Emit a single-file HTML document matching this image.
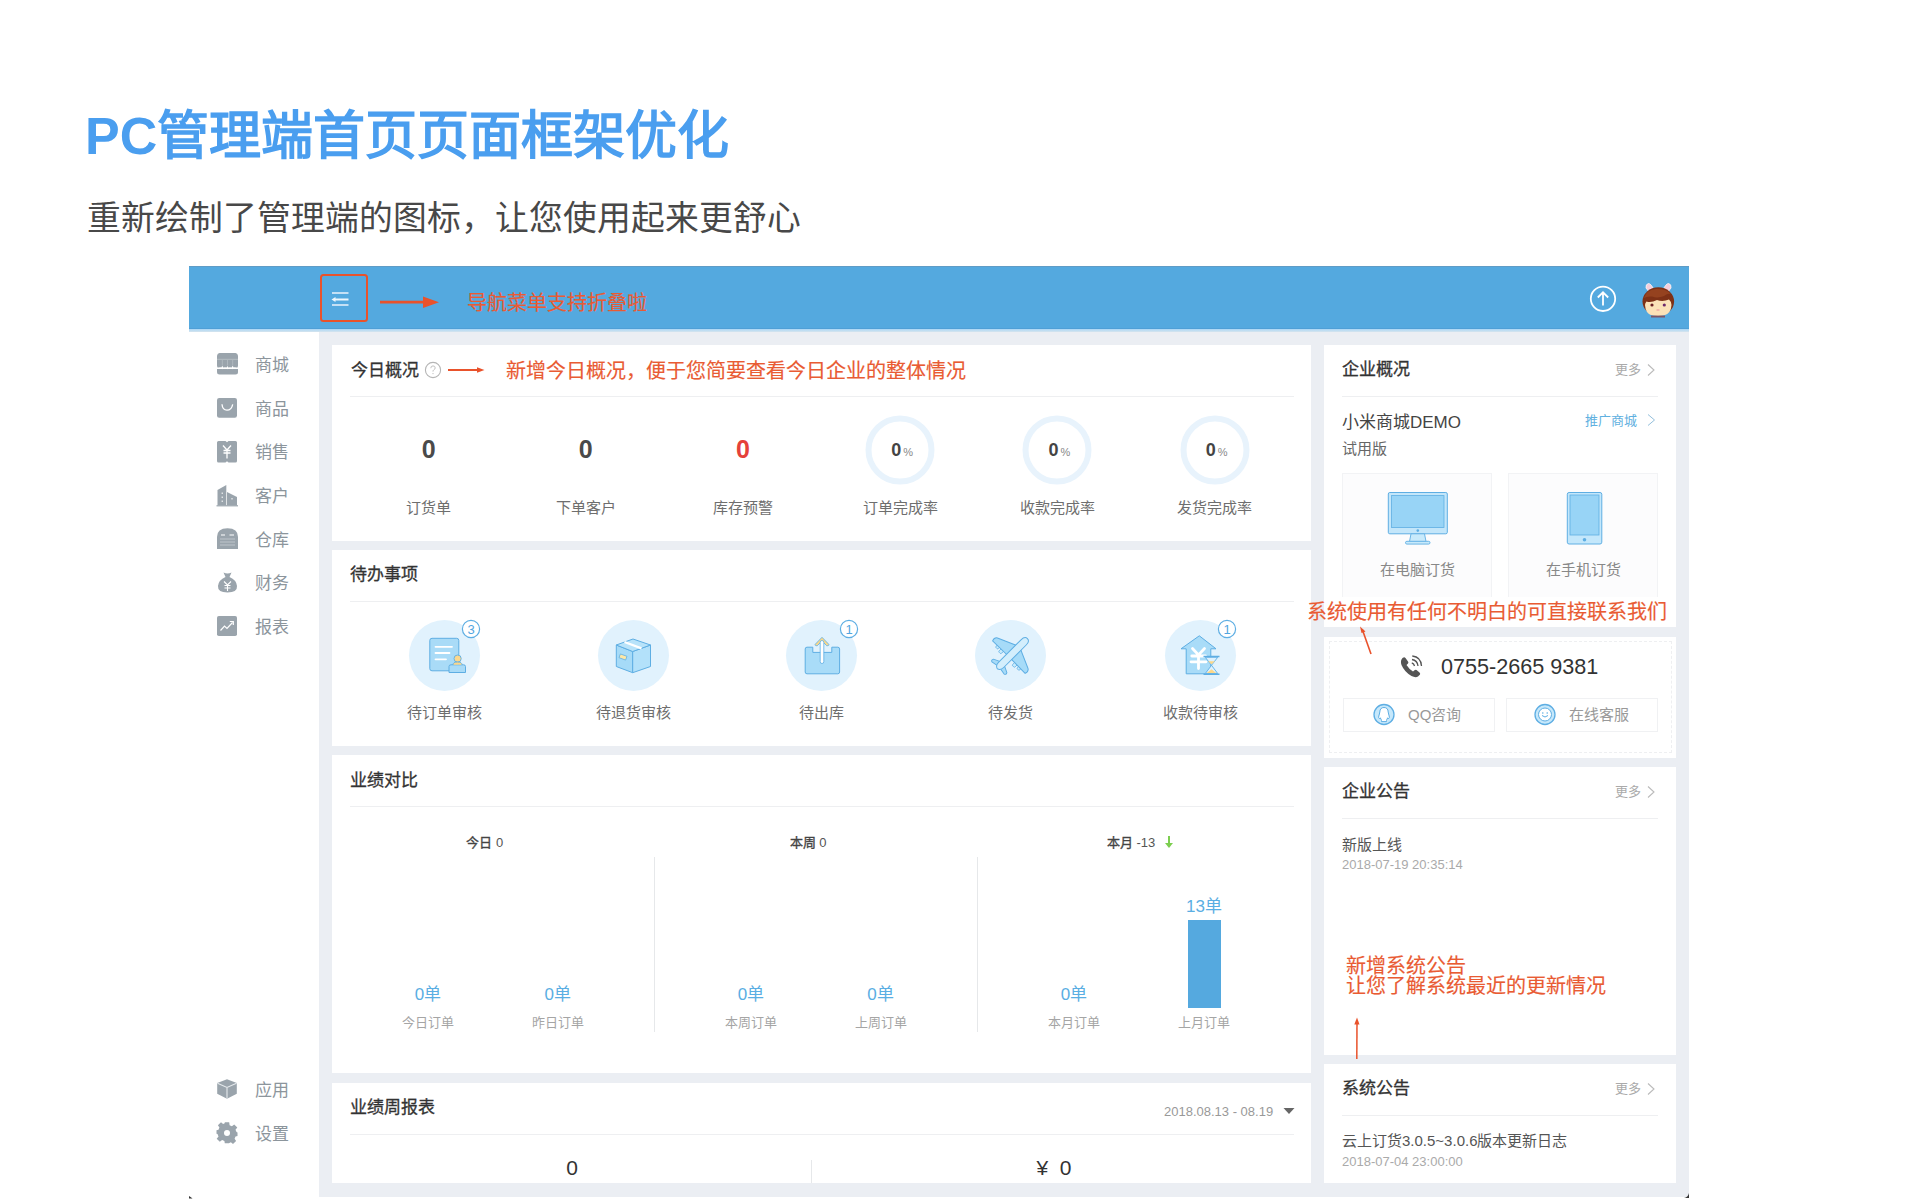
<!DOCTYPE html>
<html lang="zh-CN"><head><meta charset="utf-8">
<style>
*{margin:0;padding:0;box-sizing:border-box}
html,body{width:1920px;height:1200px;overflow:hidden;background:#fff}
body{position:relative;font-family:"Liberation Sans",sans-serif;color:#333}
.a{position:absolute;white-space:nowrap}
.t{position:absolute;white-space:nowrap;line-height:1}
.card{position:absolute;background:#fff}
.hr{position:absolute;height:1px;background:#eeeff1}
.org{color:#e95b33;-webkit-text-stroke:0.15px #e95b33}
</style></head><body>
<!-- page titles -->
<div class="t" id="title" style="left:85px;top:109.5px;font-size:52px;font-weight:bold;color:#4a9eef">PC管理端首页页面框架优化</div>
<div class="t" id="sub" style="left:86.5px;top:201.5px;font-size:33.8px;color:#484848">重新绘制了管理端的图标，让您使用起来更舒心</div>

<!-- app frame -->
<div class="a" style="left:189px;top:266px;width:1500px;height:63px;background:#54a9df;border-top:1px solid #5f9cc6;border-bottom:1px solid #4f9fd6"></div>
<div class="a" style="left:189px;top:329px;width:1500px;height:3px;background:linear-gradient(#a9d7f6,#d6e4ee)"></div>
<div class="a" style="left:189px;top:332px;width:130px;height:865px;background:#fff"></div>
<div class="a" style="left:319px;top:332px;width:1370px;height:865px;background:#ebeef3"></div>

<!-- cards -->
<div class="card" style="left:332px;top:345px;width:979px;height:196px"></div>
<div class="card" style="left:332px;top:550px;width:979px;height:196px"></div>
<div class="card" style="left:332px;top:755px;width:979px;height:318px"></div>
<div class="card" style="left:332px;top:1083px;width:979px;height:100px"></div>
<div class="card" style="left:1324px;top:345px;width:352px;height:282px"></div>
<div class="card" style="left:1324px;top:637px;width:352px;height:120.5px"></div>
<div class="card" style="left:1324px;top:767px;width:352px;height:288px"></div>
<div class="card" style="left:1324px;top:1064px;width:352px;height:119px"></div>


<!-- header content -->
<div class="a" style="left:320px;top:274px;width:48px;height:48px;border:2.8px solid #e9522b;border-radius:3.5px"></div>
<svg class="a" style="left:328px;top:288px" width="24" height="22" viewBox="0 0 24 22">
 <rect x="4" y="4" width="16.5" height="2" fill="#c4e0f5"/>
 <rect x="6.5" y="10.5" width="14" height="2" fill="#eef7fd"/>
 <path d="M3.5 11.5 L7.5 9 L7.5 14 Z" fill="#eef7fd"/>
 <rect x="4" y="16" width="16.5" height="2" fill="#c4e0f5"/>
</svg>
<svg class="a" style="left:378px;top:294px" width="64" height="16" viewBox="0 0 64 16">
 <path d="M2 6.8 L48 6.8 L48 9.6 L2 9.6 Z" fill="#e9522b"/>
 <path d="M45 2.5 L61 8.2 L45 13.9 Z" fill="#e9522b"/>
</svg>
<div class="t org" style="left:467px;top:292.8px;font-size:20px">导航菜单支持折叠啦</div>
<svg class="a" style="left:1588px;top:284px" width="30" height="30" viewBox="0 0 30 30">
 <circle cx="15" cy="14.8" r="12.2" fill="none" stroke="#fff" stroke-width="1.8"/>
 <path d="M15 21.5 V8.5 M9.8 13.5 L15 8.3 L20.2 13.5" fill="none" stroke="#fff" stroke-width="1.8"/>
</svg>

<!-- sidebar -->
<svg class="a" style="left:216px;top:352px" width="23" height="24" viewBox="0 0 23 24">
 <path d="M3.5 1 H19.5 Q21.5 1 22 3.5 L22 7 H1 L1 3.5 Q1.5 1 3.5 1Z" fill="#9aa4ac"/>
 <path d="M1 7 H22 V13.5 Q22 16 19.5 16 Q17 16 16.7 13.5 Q16.3 16 14 16 Q11.5 16 11.5 13.5 Q11.2 16 9 16 Q6.5 16 6.3 13.5 Q6 16 3.5 16 Q1 16 1 13.5 Z" fill="#9aa4ac"/>
 <path d="M1 7.3 H22" stroke="#c1c8cd" stroke-width="0.7"/>
 <path d="M6.3 8 V13.3 M11.5 8 V13.3 M16.7 8 V13.3" stroke="#b9c1c7" stroke-width="0.7"/>
 <path d="M1 17 V20 Q1 22.5 3.5 22.5 H19.5 Q22 22.5 22 20 V17 Z" fill="#9aa4ac"/>
 <path d="M1.5 16.6 Q4 15 6.5 16.6 Q9 15 11.5 16.6 Q14 15 16.5 16.6 Q19 15 21.5 16.6" fill="none" stroke="#fff" stroke-width="1.1"/>
</svg>
<div class="t" style="left:255px;top:357px;font-size:17px;color:#8c959c">商城</div>

<svg class="a" style="left:216px;top:397px" width="22" height="22" viewBox="0 0 22 22">
 <rect x="1" y="1" width="20" height="19.7" rx="2.2" fill="#9aa4ac"/>
 <path d="M6 7.3 Q6.5 13.2 11 13.2 Q15.5 13.2 16.7 7.3" fill="none" stroke="#fff" stroke-width="1.3"/>
</svg>
<div class="t" style="left:255px;top:401px;font-size:17px;color:#8c959c">商品</div>

<svg class="a" style="left:216px;top:440px" width="22" height="24" viewBox="0 0 22 24">
 <path d="M2.5 1 H9.5 L11 2.3 L12.5 1 H19.5 Q21 1 21 2.5 V21 Q21 22.6 19.5 22.6 H12.5 L11 21.3 L9.5 22.6 H2.5 Q1 22.6 1 21 V2.5 Q1 1 2.5 1Z" fill="#9aa4ac"/>
 <path d="M7 5.5 L11 10 L15 5.5 M7.5 10.5 H14.5 M7.5 13 H14.5 M11 10 V18.5" fill="none" stroke="#fff" stroke-width="1.3"/>
</svg>
<div class="t" style="left:255px;top:444px;font-size:17px;color:#8c959c">销售</div>

<svg class="a" style="left:216px;top:484px" width="23" height="23" viewBox="0 0 23 23">
 <path d="M1.5 21.5 V6 L10.3 1 V21.5 Z" fill="#9aa4ac"/>
 <path d="M11 21.5 V8 L19 12 L21 13 V21.5 Z" fill="#9aa4ac"/>
 <path d="M0.5 21.8 H22" stroke="#9aa4ac" stroke-width="1.2"/>
 <path d="M6.2 8.5 V10 M6.2 12.5 V14 M6.2 16.5 V18" stroke="#fff" stroke-width="1"/>
 <path d="M16 14 V15.5" stroke="#fff" stroke-width="1"/>
</svg>
<div class="t" style="left:255px;top:488px;font-size:17px;color:#8c959c">客户</div>

<svg class="a" style="left:216px;top:527px" width="23" height="24" viewBox="0 0 23 24">
 <path d="M1 22 V10 Q1 1.2 11.5 1.2 Q22 1.2 22 10 V22 Z" fill="#9aa4ac"/>
 <path d="M5 8 H9 M13.5 8 H18" stroke="#fff" stroke-width="1.2"/>
 <path d="M4 12 H19 M4 15 H19 M4 18 H19" stroke="#c3cacf" stroke-width="0.9"/>
</svg>
<div class="t" style="left:255px;top:532px;font-size:17px;color:#8c959c">仓库</div>

<svg class="a" style="left:216px;top:571px" width="23" height="23" viewBox="0 0 23 23">
 <path d="M7.5 1.5 Q11.5 3.5 15.5 1.5 L13.5 6 Q20.5 9 21 15 Q21.5 21.5 11.5 21.5 Q1.5 21.5 2 15 Q2.5 9 9.5 6 Z" fill="#9aa4ac"/>
 <path d="M8 10.5 L11.5 14 L15 10.5 M8.5 14.5 H14.5 M8.5 17 H14.5 M11.5 14 V20" fill="none" stroke="#fff" stroke-width="1.1"/>
</svg>
<div class="t" style="left:255px;top:575px;font-size:17px;color:#8c959c">财务</div>

<svg class="a" style="left:216px;top:615px" width="22" height="22" viewBox="0 0 22 22">
 <rect x="1" y="1" width="20" height="20" rx="1.8" fill="#9aa4ac"/>
 <path d="M4.5 15.5 L8.5 11 L11 13.5 L16.5 7.5" fill="none" stroke="#fff" stroke-width="1.2"/>
 <path d="M13.8 6.5 H17.3 V10" fill="none" stroke="#fff" stroke-width="1.2"/>
</svg>
<div class="t" style="left:255px;top:619px;font-size:17px;color:#8c959c">报表</div>

<svg class="a" style="left:216px;top:1078px" width="22" height="22" viewBox="0 0 22 22">
 <path d="M11 1.2 L20.8 5 V15.8 L11 20.8 L1.2 15.8 V5 Z" fill="#9aa4ac"/>
 <path d="M1.5 5.2 L11 9.5 L20.5 5.2 M11 9.5 V20.5" fill="none" stroke="#e6eaed" stroke-width="1.1"/>
</svg>
<div class="t" style="left:255px;top:1082px;font-size:17px;color:#8c959c">应用</div>

<svg class="a" style="left:215px;top:1121px" width="24" height="24" viewBox="0 0 24 24">
 <g transform="translate(12 11.8)">
 <path d="M-2.2 -10.5 H2.2 L2.6 -7.6 L4.9 -6.6 L7.2 -8.4 L10.3 -5.3 L8.5 -3 L9.5 -0.7 L10.5 -0.3 V3.2 L8.5 3.7 L7.6 5.9 L9.1 8.1 L6 11.2 L3.9 9.5 L2.3 10.2 L2 10.5 H-2.2 L-2.6 8.2 L-4.9 7.2 L-7.2 9 L-10.3 5.9 L-8.5 3.6 L-9.5 1.3 L-10.5 0.9 V-2.6 L-8.5 -3.1 L-7.6 -5.3 L-9.1 -7.5 L-6 -10.6 L-3.9 -8.9 L-2.3 -9.6 Z" fill="#9aa4ac"/>
 <circle cx="0" cy="0.2" r="3" fill="#fff"/>
 </g>
</svg>
<div class="t" style="left:255px;top:1126px;font-size:17px;color:#8c959c">设置</div>

<!-- card1 今日概况 -->
<div class="t" style="left:351px;top:361.5px;font-size:17px;color:#333;-webkit-text-stroke:0.3px #333">今日概况</div>
<svg class="a" style="left:423px;top:360px" width="20" height="20" viewBox="0 0 20 20">
 <circle cx="10" cy="10" r="7.6" fill="none" stroke="#b5b5b5" stroke-width="1.1"/>
 <path d="M7.8 8.2 Q7.8 5.9 10 5.9 Q12.2 5.9 12.2 7.9 Q12.2 9.2 10.6 10 Q10 10.4 10 11.6" fill="none" stroke="#c0c0c0" stroke-width="1"/>
 <circle cx="10" cy="13.6" r="0.7" fill="#c0c0c0"/>
</svg>
<svg class="a" style="left:446px;top:364px" width="42" height="12" viewBox="0 0 42 12">
 <path d="M2 5 H33 V7 H2 Z" fill="#e9522b"/>
 <path d="M31 3.3 L38.5 6 L31 8.7 Z" fill="#e9522b"/>
</svg>
<div class="t org" style="left:506px;top:361.3px;font-size:20px">新增今日概况，便于您简要查看今日企业的整体情况</div>
<div class="hr" style="left:350px;top:396px;width:944px"></div>
<div class="t" style="left:328.6px;width:200px;text-align:center;top:499.6px;font-size:15px;color:#6e6e6e">订货单</div>
<div class="t" style="left:485.79999999999995px;width:200px;text-align:center;top:499.6px;font-size:15px;color:#6e6e6e">下单客户</div>
<div class="t" style="left:643px;width:200px;text-align:center;top:499.6px;font-size:15px;color:#6e6e6e">库存预警</div>
<div class="t" style="left:800.2px;width:200px;text-align:center;top:499.6px;font-size:15px;color:#6e6e6e">订单完成率</div>
<div class="t" style="left:957.4000000000001px;width:200px;text-align:center;top:499.6px;font-size:15px;color:#6e6e6e">收款完成率</div>
<div class="t" style="left:1114.6px;width:200px;text-align:center;top:499.6px;font-size:15px;color:#6e6e6e">发货完成率</div>
<div class="t" style="left:378.6px;width:100px;text-align:center;top:437px;font-size:25px;font-weight:bold;color:#4a4a4a">0</div>
<div class="t" style="left:535.8px;width:100px;text-align:center;top:437px;font-size:25px;font-weight:bold;color:#4a4a4a">0</div>
<div class="t" style="left:693px;width:100px;text-align:center;top:437px;font-size:25px;font-weight:bold;color:#e5413a">0</div>
<svg class="a" style="left:863.2px;top:413px" width="74" height="74" viewBox="0 0 74 74"><circle cx="37" cy="37" r="31.5" fill="none" stroke="#e8f3fc" stroke-width="6"/></svg>
<div class="t" style="left:852.2px;width:100px;text-align:center;top:441.3px;font-size:18px;font-weight:bold;color:#444">0<span style="font-size:11px;font-weight:normal;color:#888;margin-left:2px">%</span></div>
<svg class="a" style="left:1020.4000000000001px;top:413px" width="74" height="74" viewBox="0 0 74 74"><circle cx="37" cy="37" r="31.5" fill="none" stroke="#e8f3fc" stroke-width="6"/></svg>
<div class="t" style="left:1009.4000000000001px;width:100px;text-align:center;top:441.3px;font-size:18px;font-weight:bold;color:#444">0<span style="font-size:11px;font-weight:normal;color:#888;margin-left:2px">%</span></div>
<svg class="a" style="left:1177.6px;top:413px" width="74" height="74" viewBox="0 0 74 74"><circle cx="37" cy="37" r="31.5" fill="none" stroke="#e8f3fc" stroke-width="6"/></svg>
<div class="t" style="left:1166.6px;width:100px;text-align:center;top:441.3px;font-size:18px;font-weight:bold;color:#444">0<span style="font-size:11px;font-weight:normal;color:#888;margin-left:2px">%</span></div>

<!-- card2 待办事项 -->
<div class="t" style="left:350px;top:565.5px;font-size:17px;color:#333;-webkit-text-stroke:0.3px #333">待办事项</div>
<div class="hr" style="left:350px;top:601px;width:944px"></div>
<div class="a" style="left:409.1px;top:620px;width:71px;height:71px;border-radius:50%;background:#e1f2fd"></div>
<div class="t" style="left:344.6px;width:200px;text-align:center;top:705.0px;font-size:15px;color:#6e6e6e">待订单审核</div>
<div class="a" style="left:597.7px;top:620px;width:71px;height:71px;border-radius:50%;background:#e1f2fd"></div>
<div class="t" style="left:533.2px;width:200px;text-align:center;top:705.0px;font-size:15px;color:#6e6e6e">待退货审核</div>
<div class="a" style="left:786.3px;top:620px;width:71px;height:71px;border-radius:50%;background:#e1f2fd"></div>
<div class="t" style="left:721.8px;width:200px;text-align:center;top:705.0px;font-size:15px;color:#6e6e6e">待出库</div>
<div class="a" style="left:975.1px;top:620px;width:71px;height:71px;border-radius:50%;background:#e1f2fd"></div>
<div class="t" style="left:910.6px;width:200px;text-align:center;top:705.0px;font-size:15px;color:#6e6e6e">待发货</div>
<div class="a" style="left:1164.5px;top:620px;width:71px;height:71px;border-radius:50%;background:#e1f2fd"></div>
<div class="t" style="left:1100px;width:200px;text-align:center;top:705.0px;font-size:15px;color:#6e6e6e">收款待审核</div>
<svg class="a" style="left:424px;top:634px" width="46" height="42" viewBox="424 634 46 42">
 <rect x="429.8" y="638.3" width="29" height="32.5" rx="2.2" fill="#a9dbf7" stroke="#5eaee3" stroke-width="1"/>
 <path d="M435.5 646.8 H452 M435.5 653 H449.5 M435.5 659.3 H446" stroke="#fff" stroke-width="1.8" stroke-linecap="round"/>
 <path d="M449 672.5 V666.5 Q449 664.8 451 664.8 H463.5 Q465.5 664.8 465.5 666.5 V672.5 Z" fill="#a9dbf7" stroke="#5eaee3" stroke-width="1"/>
 <circle cx="457.6" cy="658.6" r="3.6" fill="#fbd78c" stroke="#5eaee3" stroke-width="0.9"/>
 <path d="M453 664.8 Q453 662 457.6 662 Q462 662 462 664.8" fill="#fbd78c" stroke="#5eaee3" stroke-width="0.9"/>
</svg>
<svg class="a" style="left:460.8px;top:618.8px" width="20" height="20" viewBox="0 0 20 20"><circle cx="10" cy="10" r="8.6" fill="#fff" stroke="#5eaee3" stroke-width="1.2"/><text x="10" y="14.6" text-anchor="middle" font-family="Liberation Sans" font-size="13" fill="#52a6df">3</text></svg>
<svg class="a" style="left:612px;top:636px" width="42" height="40" viewBox="612 636 42 40">
 <path d="M616.3 645 L632.7 651.5 V672.7 L616.3 666.5 Z" fill="#a6dbf8" stroke="#5eaee3" stroke-width="1"/>
 <path d="M632.7 651.5 L650.5 645 V666.5 L632.7 672.7 Z" fill="#b3e1fa" stroke="#5eaee3" stroke-width="1"/>
 <path d="M616.3 645 L633 639 L650.5 645 L632.7 651.5 Z" fill="#b8e3fa" stroke="#5eaee3" stroke-width="1"/>
 <path d="M624.5 642 L641.5 648.4" stroke="#fff" stroke-width="2.2"/>
 <rect x="619.5" y="655" width="7" height="4" fill="#fde7a6" stroke="#5eaee3" stroke-width="0.7" transform="rotate(20 623 657)"/>
</svg>
<svg class="a" style="left:802px;top:634px" width="42" height="42" viewBox="802 634 42 42">
 <path d="M805.2 649 Q805.2 647.2 807 647.2 H812.8 V652.4 H831.8 V647.2 H837.8 Q839.6 647.2 839.6 649 V672 Q839.6 673.8 837.8 673.8 H807 Q805.2 673.8 805.2 672 Z" fill="#a9dcf8" stroke="#5eaee3" stroke-width="1"/>
 <path d="M822 637.3 L828.8 644.3 Q829.3 645.3 828.3 645.6 L826.8 645.8 L822 641 L817.2 645.8 L815.7 645.6 Q814.7 645.3 815.2 644.3 Z" fill="#fbd88a" stroke="#5eaee3" stroke-width="0.8" stroke-linejoin="round"/>
 <rect x="820.2" y="640.5" width="3.6" height="23" rx="1.8" fill="#fff" stroke="#5eaee3" stroke-width="0.8"/>
</svg>
<svg class="a" style="left:839px;top:619px" width="20" height="20" viewBox="0 0 20 20"><circle cx="10" cy="10" r="8.6" fill="#fff" stroke="#5eaee3" stroke-width="1.2"/><text x="10" y="14.6" text-anchor="middle" font-family="Liberation Sans" font-size="13" fill="#52a6df">1</text></svg>
<svg class="a" style="left:986px;top:630px" width="50" height="50" viewBox="986 630 50 50">
 <g transform="translate(1011 655) rotate(45) scale(1.08)">
  <path d="M-10.5 1.5 h3.2 v3.5 q0 1 -1 1 h-1.2 q-1 0 -1 -1 Z M-15.5 0.8 h3 v3.2 q0 1 -1 1 h-1 q-1 0 -1 -1 Z" fill="#c9ebfc" stroke="#5eaee3" stroke-width="0.7"/>
  <path d="M10.5 1.5 h-3.2 v3.5 q0 1 1 1 h1.2 q1 0 1 -1 Z M15.5 0.8 h-3 v3.2 q0 1 1 1 h1 q1 0 1 -1 Z" fill="#c9ebfc" stroke="#5eaee3" stroke-width="0.7"/>
  <path d="M-2.5 -10 L-20 -2.3 Q-22.5 -0.8 -21.3 2.8 L-2.5 2.5 Z" fill="#a6dbf8" stroke="#5eaee3" stroke-width="0.9" stroke-linejoin="round"/>
  <path d="M2.5 -10 L20 -2.3 Q22.5 -0.8 21.3 2.8 L2.5 2.5 Z" fill="#a6dbf8" stroke="#5eaee3" stroke-width="0.9" stroke-linejoin="round"/>
  <path d="M-2 11 L-8.8 14.2 Q-10 16.3 -8 17 L-1.5 15.8 Z M2 11 L8.8 14.2 Q10 16.3 8 17 L1.5 15.8 Z" fill="#a6dbf8" stroke="#5eaee3" stroke-width="0.9" stroke-linejoin="round"/>
  <path d="M-3.4 -16.5 Q-3.4 -21.5 0 -21.5 Q3.4 -21.5 3.4 -16.5 V13 Q3.4 17 0 18 Q-3.4 17 -3.4 13 Z" fill="#d3eefc" stroke="#5eaee3" stroke-width="0.9"/>
 </g>
</svg>
<svg class="a" style="left:1178px;top:633px" width="44" height="44" viewBox="1178 633 44 44">
 <path d="M1199.3 635.8 L1216 648.8 H1210.8 V673.8 H1186.2 V648.8 H1181 Z" fill="#a9dcf8" stroke="#5eaee3" stroke-width="1" stroke-linejoin="round"/>
 <path d="M1192.5 648.5 L1198.5 655 L1204.5 648.5 M1191.8 656 H1205.5 M1191 661.8 H1206 M1198.5 655 V668.5" fill="none" stroke="#fff" stroke-width="2.8" stroke-linecap="round"/>
 <path d="M1203.5 656.5 H1219.5 M1203.5 674.2 H1219.5" stroke="#5eaee3" stroke-width="1.6"/>
 <path d="M1205.3 657.3 H1217.7 L1211.5 665.3 L1217.7 673.5 H1205.3 L1211.5 665.3 Z" fill="#ddf1fd" stroke="#5eaee3" stroke-width="0.9"/>
 <path d="M1208 661.2 H1215 L1211.5 664.3 Z M1206.8 673 L1211.5 669.2 L1216.2 673 Z" fill="#fbd88a"/>
</svg>
<svg class="a" style="left:1216.6px;top:619px" width="20" height="20" viewBox="0 0 20 20"><circle cx="10" cy="10" r="8.6" fill="#fff" stroke="#5eaee3" stroke-width="1.2"/><text x="10" y="14.6" text-anchor="middle" font-family="Liberation Sans" font-size="13" fill="#52a6df">1</text></svg>

<!-- card3 业绩对比 -->
<div class="t" style="left:350px;top:771.5px;font-size:17px;color:#333;-webkit-text-stroke:0.3px #333">业绩对比</div>
<div class="hr" style="left:350px;top:806px;width:944px"></div>
<div class="a" style="left:654px;top:857px;width:1px;height:175px;background:#e6e8ea"></div>
<div class="a" style="left:977px;top:857px;width:1px;height:175px;background:#e6e8ea"></div>
<div class="t" style="left:404.7px;width:160px;text-align:center;top:835.5px;font-size:13px;color:#555"><b style="font-weight:normal;-webkit-text-stroke:0.35px #444;color:#444">今日</b> 0</div>
<div class="t" style="left:728px;width:160px;text-align:center;top:835.5px;font-size:13px;color:#555"><b style="font-weight:normal;-webkit-text-stroke:0.35px #444;color:#444">本周</b> 0</div>
<div class="t" style="left:1051px;width:160px;text-align:center;top:835.5px;font-size:13px;color:#555"><b style="font-weight:normal;-webkit-text-stroke:0.35px #444;color:#444">本月</b> -13</div>
<svg class="a" style="left:1163px;top:834px" width="12" height="16" viewBox="0 0 12 16"><path d="M6 2 V12" stroke="#7cce4f" stroke-width="2"/><path d="M2 9 L6 14 L10 9 Z" fill="#7cce4f"/></svg>
<div class="t" style="left:368px;width:120px;text-align:center;top:1016.2px;font-size:13px;color:#a5a5a5">今日订单</div>
<div class="t" style="left:368px;width:120px;text-align:center;top:986.0px;font-size:17px;color:#5aaee3">0单</div>
<div class="t" style="left:497.79999999999995px;width:120px;text-align:center;top:1016.2px;font-size:13px;color:#a5a5a5">昨日订单</div>
<div class="t" style="left:497.79999999999995px;width:120px;text-align:center;top:986.0px;font-size:17px;color:#5aaee3">0单</div>
<div class="t" style="left:691px;width:120px;text-align:center;top:1016.2px;font-size:13px;color:#a5a5a5">本周订单</div>
<div class="t" style="left:691px;width:120px;text-align:center;top:986.0px;font-size:17px;color:#5aaee3">0单</div>
<div class="t" style="left:820.5px;width:120px;text-align:center;top:1016.2px;font-size:13px;color:#a5a5a5">上周订单</div>
<div class="t" style="left:820.5px;width:120px;text-align:center;top:986.0px;font-size:17px;color:#5aaee3">0单</div>
<div class="t" style="left:1014px;width:120px;text-align:center;top:1016.2px;font-size:13px;color:#a5a5a5">本月订单</div>
<div class="t" style="left:1014px;width:120px;text-align:center;top:986.0px;font-size:17px;color:#5aaee3">0单</div>
<div class="t" style="left:1144.3px;width:120px;text-align:center;top:1016.2px;font-size:13px;color:#a5a5a5">上月订单</div>
<div class="t" style="left:1144px;width:120px;text-align:center;top:897.8px;font-size:17px;color:#5aaee3">13单</div>
<div class="a" style="left:1188px;top:920px;width:33px;height:88px;background:#55a9df"></div>

<!-- card4 业绩周报表 -->
<div class="t" style="left:350px;top:1098.5px;font-size:17px;color:#333;-webkit-text-stroke:0.3px #333">业绩周报表</div>
<div class="t" style="left:1164px;top:1105px;font-size:13px;color:#999">2018.08.13 - 08.19</div>
<svg class="a" style="left:1282px;top:1106px" width="14" height="10" viewBox="0 0 14 10"><path d="M1.5 2 H12.5 L7 8 Z" fill="#666"/></svg>
<div class="hr" style="left:350px;top:1134px;width:944px"></div>
<div class="t" style="left:522px;width:100px;text-align:center;top:1157px;font-size:21px;color:#333">0</div>
<div class="t" style="left:1004px;width:100px;text-align:center;top:1157px;font-size:21px;color:#333">¥&nbsp;&nbsp;0</div>
<div class="a" style="left:811px;top:1160px;width:1px;height:23px;background:#e6e8ea"></div>

<!-- right A 企业概况 -->
<div class="t" style="left:1342px;top:360.5px;font-size:17px;color:#333;-webkit-text-stroke:0.3px #333">企业概况</div>
<div class="t" style="left:1615px;top:363px;font-size:13px;color:#aaa">更多</div>
<svg class="a" style="left:1645px;top:363px" width="12" height="14" viewBox="0 0 12 14"><path d="M3 1.5 L9 7 L3 12.5" fill="none" stroke="#bbb" stroke-width="1.1"/></svg>

<div class="hr" style="left:1342px;top:396px;width:316px"></div>
<div class="t" style="left:1342px;top:413.8px;font-size:17px;color:#444">小米商城DEMO</div>
<div class="t" style="left:1585px;top:414.3px;font-size:13px;color:#5fb0e0">推广商城</div>
<svg class="a" style="left:1645px;top:413px" width="12" height="14" viewBox="0 0 12 14"><path d="M3 1.5 L9.5 7 L3 12.5" fill="none" stroke="#93bfdc" stroke-width="1"/></svg>
<div class="t" style="left:1342px;top:441.0px;font-size:15px;color:#666">试用版</div>
<div class="a" style="left:1342px;top:473px;width:150px;height:140px;border:1px solid #f2f3f5;background:#fcfcfd"></div>
<div class="a" style="left:1508px;top:473px;width:150px;height:140px;border:1px solid #f2f3f5;background:#fcfcfd"></div>
<svg class="a" style="left:1385px;top:490px" width="66" height="56" viewBox="1385 490 66 56">
 <rect x="1388.3" y="492.5" width="59" height="41.3" rx="1.5" fill="#c3e6fa" stroke="#5eaee3" stroke-width="1"/>
 <rect x="1391.6" y="495.6" width="52.4" height="32" fill="#98d4f6" stroke="#5eaee3" stroke-width="0.8"/>
 <circle cx="1417.8" cy="530.6" r="1.3" fill="#5eaee3"/>
 <path d="M1411 533.8 L1409.5 541.5 H1426 L1424.5 533.8 Z" fill="#c8eafb" stroke="#5eaee3" stroke-width="0.9"/>
 <rect x="1405.5" y="541.3" width="24.5" height="2.8" rx="1.4" fill="#c8eafb" stroke="#5eaee3" stroke-width="0.9"/>
</svg>
<svg class="a" style="left:1564px;top:490px" width="42" height="56" viewBox="1564 490 42 56">
 <rect x="1567.3" y="492.5" width="34.5" height="51.5" rx="1.8" fill="#c3e7fb" stroke="#5eaee3" stroke-width="1"/>
 <rect x="1570" y="495" width="29" height="40" fill="#98d4f6" stroke="#5eaee3" stroke-width="0.8"/>
 <circle cx="1584.5" cy="539.8" r="1.8" fill="#5eaee3"/>
</svg>
<div class="t" style="left:1317px;width:200px;text-align:center;top:562.0px;font-size:15px;color:#888">在电脑订货</div>
<div class="t" style="left:1483px;width:200px;text-align:center;top:562.0px;font-size:15px;color:#888">在手机订货</div>
<div class="a" style="left:1326px;top:597px;width:348px;height:30px;background:#fff"></div>
<div class="t org" style="left:1307px;top:602.3px;font-size:20px">系统使用有任何不明白的可直接联系我们</div>

<!-- right B contact -->
<div class="a" style="left:1329px;top:641px;width:343px;height:112px;border:1px dashed #eeeff1"></div>
<svg class="a" style="left:1358px;top:624px" width="16" height="32" viewBox="0 0 16 32"><path d="M13 30 L4.5 6" stroke="#e9522b" stroke-width="1.6"/><path d="M2 2.5 L7.5 7.5 L3.5 9 Z" fill="#e9522b"/></svg>
<svg class="a" style="left:1398px;top:654px" width="26" height="26" viewBox="0 0 26 26">
 <path d="M4.5 4 Q2 6.5 3.5 11 Q6.5 18 13.5 22 Q17.5 24 20 22.5 L22 20.5 Q22.5 19.5 21.5 18.5 L18.5 16 Q17.5 15.3 16.5 16.2 L15 17.5 Q11 15 8.5 11 L10 9.5 Q10.8 8.5 10 7.5 L7.5 4 Q6.5 3 5.5 3.5 Z" fill="#555"/>
 <path d="M13.8 9 Q16 9.5 16.5 12 M14 5.5 Q19.5 6.5 20 12 M14.3 2 Q23 3 23.5 12" fill="none" stroke="#555" stroke-width="1.3"/>
</svg>
<div class="t" style="left:1441px;top:655.5px;font-size:21.6px;color:#333">0755-2665 9381</div>
<div class="a" style="left:1343px;top:698px;width:152px;height:34px;border:1px solid #f0f1f3"></div>
<div class="a" style="left:1506px;top:698px;width:152px;height:34px;border:1px solid #f0f1f3"></div>
<svg class="a" style="left:1372px;top:703px" width="24" height="24" viewBox="0 0 24 24">
 <circle cx="12" cy="11.5" r="10" fill="#c6e8fb" stroke="#5eaee3" stroke-width="1.3"/>
 <path d="M12 4.5 Q8 4.5 7.8 9 Q7.5 11 6.8 13 Q6.2 15 7.3 15.5 Q8 15.8 8.4 14.8 Q8.8 17 10 17.5 Q9 18 9.6 18.6 H14.4 Q15 18 14 17.5 Q15.2 17 15.6 14.8 Q16 15.8 16.7 15.5 Q17.8 15 17.2 13 Q16.5 11 16.2 9 Q16 4.5 12 4.5 Z" fill="#fff" stroke="#5eaee3" stroke-width="1"/>
</svg>
<div class="t" style="left:1408px;top:707.0px;font-size:15px;color:#999">QQ咨询</div>
<svg class="a" style="left:1533px;top:703px" width="24" height="24" viewBox="0 0 24 24">
 <circle cx="12" cy="11.5" r="10" fill="#c6e8fb" stroke="#5eaee3" stroke-width="1.3"/>
 <circle cx="12" cy="11.5" r="6.5" fill="#fff" stroke="#5eaee3" stroke-width="1"/>
 <path d="M9 12.5 Q12 15.5 15 12.5" fill="none" stroke="#5eaee3" stroke-width="1"/>
 <circle cx="9.8" cy="10" r="0.8" fill="#5eaee3"/><circle cx="14.2" cy="10" r="0.8" fill="#5eaee3"/>
</svg>
<div class="t" style="left:1569px;top:707.0px;font-size:15px;color:#999">在线客服</div>

<!-- right C 企业公告 -->
<div class="t" style="left:1342px;top:782.5px;font-size:17px;color:#333;-webkit-text-stroke:0.3px #333">企业公告</div>
<div class="t" style="left:1615px;top:785px;font-size:13px;color:#aaa">更多</div>
<svg class="a" style="left:1645px;top:785px" width="12" height="14" viewBox="0 0 12 14"><path d="M3 1.5 L9 7 L3 12.5" fill="none" stroke="#bbb" stroke-width="1.1"/></svg>

<div class="hr" style="left:1342px;top:818px;width:316px"></div>
<div class="t" style="left:1342px;top:837.0px;font-size:15px;color:#555">新版上线</div>
<div class="t" style="left:1342px;top:858px;font-size:13px;color:#aaa">2018-07-19 20:35:14</div>
<div class="t org" style="left:1346px;top:956.3px;font-size:20px;line-height:20px">新增系统公告<br>让您了解系统最近的更新情况</div>
<svg class="a" style="left:1350px;top:1016px" width="14" height="46" viewBox="0 0 14 46"><path d="M6.8 43 L7 6" stroke="#e9522b" stroke-width="1.5"/><path d="M4.3 8.5 L7 1.5 L9.5 8.5 Z" fill="#e9522b"/></svg>

<!-- right D 系统公告 -->
<div class="t" style="left:1342px;top:1079.5px;font-size:17px;color:#333;-webkit-text-stroke:0.3px #333">系统公告</div>
<div class="t" style="left:1615px;top:1082px;font-size:13px;color:#aaa">更多</div>
<svg class="a" style="left:1645px;top:1082px" width="12" height="14" viewBox="0 0 12 14"><path d="M3 1.5 L9 7 L3 12.5" fill="none" stroke="#bbb" stroke-width="1.1"/></svg>

<div class="hr" style="left:1342px;top:1115px;width:316px"></div>
<div class="t" style="left:1342px;top:1133.0px;font-size:15px;color:#555">云上订货3.0.5~3.0.6版本更新日志</div>
<div class="t" style="left:1342px;top:1155px;font-size:13px;color:#aaa">2018-07-04 23:00:00</div>

<!-- avatar -->
<svg class="a" style="left:1640px;top:281px" width="36" height="38" viewBox="1640 281 36 38">
 <path d="M1646 288 Q1645.5 284 1648.5 283.5 Q1651 283.5 1654 290 L1650 293 Z" fill="#f5cfdc" stroke="#f7f0f3" stroke-width="0.9"/>
 <path d="M1671 288 Q1671.5 284 1668.5 283.5 Q1666 283.5 1663 290 L1667 293 Z" fill="#f5cfdc" stroke="#f7f0f3" stroke-width="0.9"/>
 <ellipse cx="1658.3" cy="301.5" rx="15.8" ry="14.2" fill="#7e3116"/>
 <path d="M1645 305 Q1645.5 313 1651 315 Q1658 317 1665 315 Q1671 313 1671.5 305 Q1671 301 1669 299.5 Q1663 302 1657 300 Q1651 303 1646.5 301.5 Q1645 303 1645 305 Z" fill="#fbe2b8"/>
 <path d="M1644 298 Q1646 290 1656 289 Q1666 288.5 1671 294 Q1668 293 1664 296 Q1658 298.5 1652 296.5 Q1647 296 1644 298 Z" fill="#95421f"/>
 <circle cx="1652" cy="305" r="1.6" fill="#6a1f24"/>
 <circle cx="1664.3" cy="305" r="1.6" fill="#6d2a6b"/>
 <ellipse cx="1658" cy="310" rx="1.8" ry="0.9" fill="#f2b5aa"/>
 <path d="M1651 315.6 H1665 V317.5 H1651 Z" fill="#7d5566"/>
</svg>

<svg class="a" style="left:187px;top:1193px" width="8" height="7" viewBox="0 0 8 7"><path d="M2 3 Q4 4 5.5 5.5 L2 5.5 Z" fill="#333"/></svg>
<svg class="a" style="left:1683px;top:1191px" width="8" height="8" viewBox="0 0 8 8"><path d="M6 2 V7 H1 Q5 6.5 6 2 Z" fill="#333"/></svg>
</body></html>
